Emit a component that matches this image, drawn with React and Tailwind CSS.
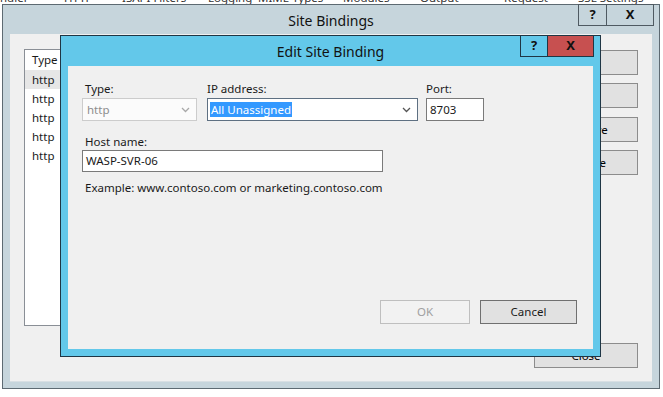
import React from 'react';

const font = { fontFamily: '"Noto Sans", "Open Sans", Arial, sans-serif' };

const tabs = [
    ['ndler', 0], ['HTTP', 64], ['ISAPI Filters', 122], ['Logging', 208], ['MIME Types', 258],
    ['Modules', 343], ['Output', 420], ['Request', 504], ['SSL Settings', 578],
];

const Chevron = ({ color }) => (
    <svg width="9" height="6" viewBox="0 0 9 6">
        <polyline points="1,1 4.5,4.5 8,1" fill="none" stroke={color} strokeWidth="1.3" />
    </svg>
);

const SideButton = ({ label, className = '' }) => (
    <div className={`flex h-[25px] w-[104px] items-center justify-center border border-[#8c8c8c] bg-[#e1e1e1] text-black ${className}`}>
        {label}
    </div>
);

const App = () => {
    return (
        <div className="relative h-[397px] w-[663px] overflow-hidden bg-white text-[11.5px] text-[#1a1a1a]" style={font}>
            {/* tab strip behind, only the bottom of the labels shows */}
            <div className="relative h-[4px] overflow-hidden">
                {tabs.map(([t, x]) => (
                    <span key={t} className="absolute top-[-11px] whitespace-nowrap text-[#333]" style={{ left: x }}>{t}</span>
                ))}
            </div>

            {/* Site Bindings window */}
            <div className="absolute left-[2px] top-[4px] flex h-[385px] w-[658px] flex-col border border-[#5d6a72] bg-[#c6d5dc]">
                <div className="relative flex h-[29px] shrink-0 items-center justify-center pt-[1px] text-[14px] text-[#111]">
                    Site Bindings
                    <div className="absolute right-[5px] top-[-1px] flex h-[22px]">
                        <div className="flex w-[29px] items-center justify-center border border-[#4f5a62] text-[13px] font-bold">?</div>
                        <div className="flex w-[47px] items-center justify-center border border-l-0 border-[#4f5a62] text-[13px] font-bold">X</div>
                    </div>
                </div>
                <div className="mx-[7px] flex h-[348px] border-b border-[#d8dfe3] bg-[#f0f0f0]">
                    <div className="ml-[14px] mt-[15px] h-[277px] w-[510px] border border-[#8a8f96] bg-white">
                        <div className="flex h-[20px] items-center px-[7px]">Type</div>
                        <div className="flex h-[19px] items-center bg-[#e6e6e6] px-[7px]">http</div>
                        <div className="flex h-[19px] items-center px-[7px]">http</div>
                        <div className="flex h-[19px] items-center px-[7px]">http</div>
                        <div className="flex h-[19px] items-center px-[7px]">http</div>
                        <div className="flex h-[19px] items-center px-[7px]">http</div>
                    </div>
                    <div className="ml-auto mr-[14px] flex flex-col pt-[16px]">
                        <SideButton label="Add..." />
                        <SideButton label="Edit..." className="mt-[8px]" />
                        <SideButton label="Remove" className="mt-[9px]" />
                        <SideButton label="Browse" className="mt-[8px]" />
                        <SideButton label="Close" className="mt-[168px]" />
                    </div>
                </div>
            </div>

            {/* Edit Site Binding dialog */}
            <div className="absolute left-[60px] top-[35px] flex h-[322px] w-[541px] flex-col border border-[#1f3645] bg-[#63c8ea]">
                <div className="relative flex h-[30px] shrink-0 items-center justify-center text-[14px] text-[#111]">
                    Edit Site Binding
                    <div className="absolute right-[6px] top-[-1px] flex h-[22px]">
                        <div className="flex w-[28px] items-center justify-center border border-[#1f3645] text-[13px] font-bold">?</div>
                        <div className="flex w-[46px] items-center justify-center border border-l-0 border-[#1f3645] bg-[#c75050] text-[13px] font-bold">X</div>
                    </div>
                </div>
                <div className="mx-[7px] h-[283px] bg-[#f0f0f0] px-[14px] pt-[14px]">
                    <div className="flex">
                        <div className="flex flex-col">
                            <span className="pl-[3px] leading-[17px]">Type:</span>
                            <div className="mt-[1px] flex h-[23px] w-[115px] items-center justify-between border border-[#cccccc] bg-[#fbfbfb] pl-[4px] pr-[6px] text-[#8d8d8d]">
                                <span>http</span>
                                <Chevron color="#a8a8a8" />
                            </div>
                        </div>
                        <div className="ml-[10px] flex flex-col">
                            <span className="leading-[17px]">IP address:</span>
                            <div className="mt-[1px] flex h-[23px] w-[211px] items-center justify-between border border-[#5e7082] bg-white pl-[2px] pr-[6px]">
                                <span className="bg-[#3399ff] px-[1px] leading-[15px] text-white">All Unassigned</span>
                                <Chevron color="#555" />
                            </div>
                        </div>
                        <div className="ml-[8px] flex flex-col">
                            <span className="leading-[17px]">Port:</span>
                            <div className="mt-[1px] flex h-[23px] w-[58px] items-center border border-[#7a7a7a] bg-white pl-[3px]">8703</div>
                        </div>
                    </div>
                    <div className="mt-[12px] pl-[3px] leading-[17px]">Host name:</div>
                    <div className="flex h-[22px] w-[301px] items-center border border-[#7a7a7a] bg-white pl-[3px]">WASP-SVR-06</div>
                    <div className="mt-[7px] pl-[3px] leading-[17px]">Example: www.contoso.com or marketing.contoso.com</div>
                    <div className="mt-[104px] flex justify-end pr-[2px]">
                        <div className="flex h-[24px] w-[90px] items-center justify-center border border-[#bfbfbf] bg-[#f2f2f2] text-[#a0a0a0]">OK</div>
                        <div className="ml-[10px] flex h-[24px] w-[97px] items-center justify-center border border-[#707070] bg-[#e1e1e1]">Cancel</div>
                    </div>
                </div>
            </div>
        </div>
    );
};

export default App;
